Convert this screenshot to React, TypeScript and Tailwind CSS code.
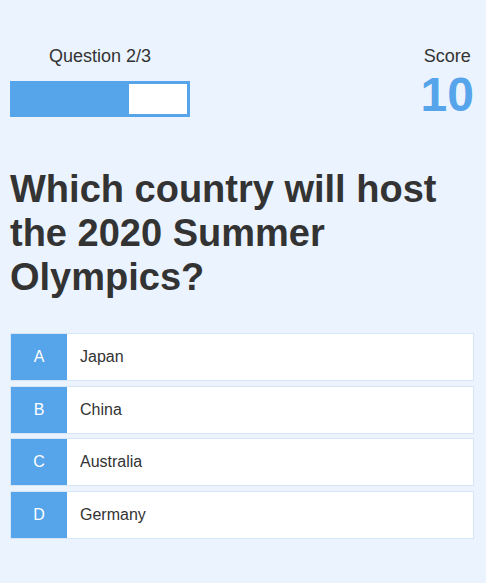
import React from "react";

const options = [
  { letter: "A", text: "Japan" },
  { letter: "B", text: "China" },
  { letter: "C", text: "Australia" },
  { letter: "D", text: "Germany" },
];

export default function App() {
  const current = 2;
  const total = 3;

  return (
    <div className="min-h-screen w-full bg-[#ebf3fe] px-[10px] pt-[46px] pb-10 text-[#333] font-['Liberation_Sans',Arial,sans-serif]">
      {/* Header: progress + score */}
      <div className="flex items-start justify-between">
        <div className="flex w-[180px] flex-col">
          <div className="text-center text-[18px] leading-[21px]">
            Question {current}/{total}
          </div>
          <div className="mt-[14px] h-[36px] w-full border-[3px] border-[#56a4ea] bg-white">
            <div
              className="h-full bg-[#56a4ea]"
              style={{ width: `${(current / total) * 100}%` }}
            />
          </div>
        </div>
        <div className="flex flex-col items-center pr-[2px]">
          <div className="text-[18px] leading-[21px]">Score</div>
          <div className="mt-[4px] text-[48px] font-bold leading-none text-[#56a4ea]">
            10
          </div>
        </div>
      </div>

      {/* Question */}
      <h1 className="mt-[48px] text-[38px] font-bold leading-[44px]">
        Which country will host the 2020 Summer Olympics?
      </h1>

      {/* Answers */}
      <div className="mt-[34px] flex flex-col gap-[4.7px] pr-[2px]">
        {options.map((o) => (
          <div
            key={o.letter}
            className="flex h-[48px] border border-[#d6e6f7] bg-white"
          >
            <div className="flex w-[56px] items-center justify-center bg-[#56a4ea] text-[16px] text-white">
              {o.letter}
            </div>
            <div className="flex items-center pl-[13px] text-[16px]">
              {o.text}
            </div>
          </div>
        ))}
      </div>
    </div>
  );
}
